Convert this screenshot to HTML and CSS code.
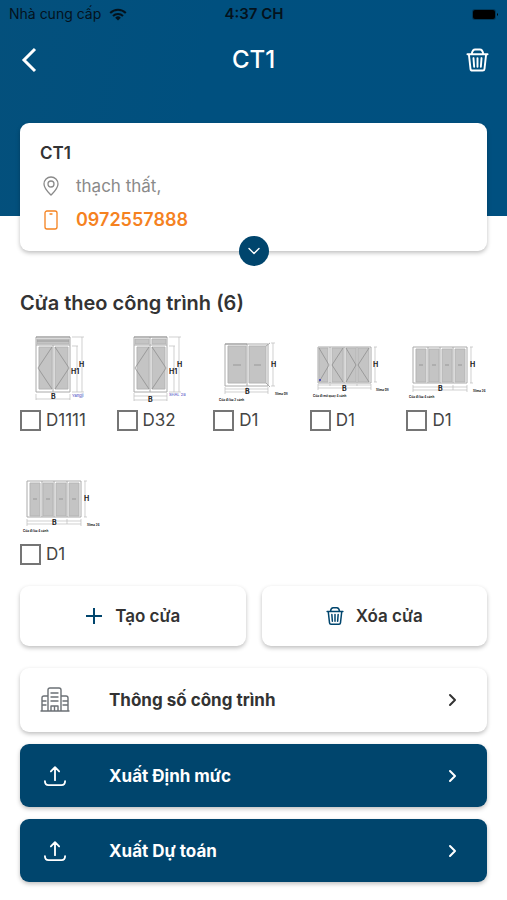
FILE: index.html
```
<!DOCTYPE html>
<html lang="vi">
<head>
    <meta charset="UTF-8">
    <meta name="viewport" content="width=device-width, initial-scale=1.0">
    <title>CT1</title>
    <link rel="stylesheet" href="styles.css">
</head>
<body>
    <!-- shared icons -->
    <svg class="sprite" aria-hidden="true">
        <symbol id="trash" viewBox="0 0 24 26">
            <path d="M1.500 7h21M3 7l1.700 15.200a2 2 0 0 0 2 1.800h10.600a2 2 0 0 0 2-1.800L21 7M6 6.500C6.500 3.500 7.500 2 9.500 2h5c2 0 3 1.500 3.500 4.500M7.800 11l.7 9M12 11v9M16.200 11l-.7 9"/>
        </symbol>
        <symbol id="upload" viewBox="0 0 24 24">
            <path d="M12 16.500V2.500M7.500 7L12 2.300 16.500 7M1 17.500c0 3 1 4.500 4 4.500h14c3 0 4-1.500 4-4.500"/>
        </symbol>
        <symbol id="next" viewBox="0 0 12 16">
            <path d="M3 3l5 5-5 5"/>
        </symbol>
        <symbol id="door-four" viewBox="0 0 80 72" overflow="visible">
            <path class="frame" d="M7 15h54v36H7zM22 15v36M34 15v36M47 15v36"/>
            <path class="glass" d="M10 17h10v33H10zM23 17h10v33H23zM36 17h10v33H36zM49 17h10v33H49z"/>
            <path class="line" d="M13 33h4M26 33h4M39 33h4M52 33h4"/>
            <path class="dim" d="M65 15v36M64 15h3M64 51h3M7 55h54M7 58h54M7 53v7M47 53v5M61 53v7"/>
            <text class="mark" x="32" y="59">B</text>
            <text class="mark" x="64" y="35">H</text>
            <text class="note" x="3" y="66">Cửa đi lùa 4 cánh</text>
            <text class="note" x="67" y="60">Slima 24</text>
        </symbol>
    </svg>

    <header class="hero">
        <div class="status">
            <span class="carrier">Nhà cung cấp
                <svg class="wifi" viewBox="0 0 18 13">
                    <path d="M1.200 5a11 11 0 0 1 15.600 0M4 8a7 7 0 0 1 10 0"/>
                    <path class="dot" d="M9 12.500L6.200 9.700a4 4 0 0 1 5.600 0z"/>
                </svg>
            </span>
            <span class="time">4:37 CH</span>
            <svg class="battery" viewBox="0 0 28 13">
                <rect class="shell" x="1" y="1" width="24" height="11" rx="3"/>
                <rect x="2" y="2" width="22" height="9" rx="2"/>
                <path d="M26 5q2 1.500 0 3z"/>
            </svg>
        </div>
        <nav class="topbar">
            <button class="icon-btn" aria-label="Quay lại">
                <svg class="back" viewBox="0 0 16 26"><path d="M14 2L3 13l11 11"/></svg>
            </button>
            <h1>CT1</h1>
            <button class="icon-btn" aria-label="Xóa công trình">
                <svg class="trash-lg"><use href="#trash"/></svg>
            </button>
        </nav>
    </header>

    <main>
        <section class="card info">
            <h2>CT1</h2>
            <p class="info-row">
                <svg viewBox="0 0 18 20"><path d="M9 19C6 16 2 12.500 2 8a7 7 0 0 1 14 0c0 4.500-4 8-7 11z"/><circle cx="9" cy="8" r="3"/></svg>
                <span>thạch thất,</span>
            </p>
            <p class="info-row phone">
                <svg viewBox="0 0 18 20"><rect x="3" y="1" width="12" height="18" rx="2"/><path d="M8 4h2"/></svg>
                <a href="tel:0972557888">0972557888</a>
            </p>
            <button class="expand" aria-label="Mở rộng">
                <svg viewBox="0 0 12 8"><path d="M1 1.500l5 5 5-5"/></svg>
            </button>
        </section>

        <h2 class="section-title">Cửa theo công trình (6)</h2>

        <div class="doors">
            <div class="door">
                <svg class="drawing" viewBox="0 0 80 72">
                    <path class="frame" d="M16 5h34v55H16zM16 13h34M33 13v47"/>
                    <path class="glass" d="M17 7h32v5H17zM19 15h13v42H19zM35 15h13v42H35z"/>
                    <path class="line" d="M16 5h34M17 9h32M32 15L18 36l14 21M35 15l14 21-14 21"/>
                    <path class="dim" d="M52 5h12M52 14h6M52 60h12M57 14v46M62 5v55M16 67h34M16 62v6M50 62v6"/>
                    <text class="mark" x="31" y="67">B</text>
                    <text class="mark" x="59" y="35">H</text>
                    <text class="mark" x="51" y="42">H1</text>
                    <text class="note blue" x="52" y="65">Yangji</text>
                </svg>
                <label><input type="checkbox">D1111</label>
            </div>
            <div class="door">
                <svg class="drawing" viewBox="0 0 80 72">
                    <path class="frame" d="M17 5h33v55H17zM17 13h33M33 5v55"/>
                    <path class="glass" d="M18 7h14v5H18zM35 7h14v5H35zM20 15h12v42H20zM35 15h13v42H35z"/>
                    <path class="line" d="M17 5h33M32 15L18 36l14 21M35 15l14 21-14 21"/>
                    <path class="dim" d="M52 5h12M52 14h6M52 60h12M57 14v46M62 5v55M17 64h33M17 68h33M17 61v8M50 61v8"/>
                    <text class="mark" x="31" y="70">B</text>
                    <text class="mark" x="60" y="35">H</text>
                    <text class="mark" x="52" y="42">H1</text>
                    <text class="note blue" x="52" y="64">SHAL 28</text>
                </svg>
                <label><input type="checkbox">D32</label>
            </div>
            <div class="door">
                <svg class="drawing" viewBox="0 0 80 72">
                    <path class="frame" d="M12 12h43v42H12zM34 12v42M53 14l4-3M53 51l4 4"/>
                    <path class="glass" d="M15 14h18v37H15zM36 14h17v37H36z"/>
                    <path class="line" d="M12 12h22M20 33h8M41 33h7"/>
                    <path class="dim" d="M60 11v43M58 11h4M58 54h4M12 57h43M12 60h43M12 55v7M34 55v3M55 55v7"/>
                    <text class="mark" x="32" y="62">B</text>
                    <text class="mark" x="58" y="35">H</text>
                    <text class="note" x="6" y="69">Cửa đi lùa 2 cánh</text>
                    <text class="note" x="62" y="63">Slima 08</text>
                </svg>
                <label><input type="checkbox">D1</label>
            </div>
            <div class="door">
                <svg class="drawing" viewBox="0 0 80 72">
                    <path class="frame" d="M8 15h53v36H8zM20 15v36M34 15v36M47 15v36"/>
                    <path class="glass" d="M9 16h9v34H9zM22 16h11v34H22zM36 16h10v34H36zM48 16h11v34H48z"/>
                    <path class="line" d="M9 16l10 17L9 50M33 16L22 33l11 17M36 16l10 17-10 17M59 16L48 33l11 17"/>
                    <path class="dim" d="M65 15v35M64 15h3M64 50h3M8 53h53M8 56h53M8 52v6M20 52v2M47 52v2M61 52v6"/>
                    <circle class="blue" cx="10" cy="48" r="1"/>
                    <text class="mark" x="32" y="59">B</text>
                    <text class="mark" x="63" y="35">H</text>
                    <text class="note" x="3" y="65">Cửa đi mở quay 4 cánh</text>
                    <text class="note" x="66" y="59">Slima 08</text>
                </svg>
                <label><input type="checkbox">D1</label>
            </div>
            <div class="door">
                <svg class="drawing"><use href="#door-four"/></svg>
                <label><input type="checkbox">D1</label>
            </div>
            <div class="door">
                <svg class="drawing"><use href="#door-four"/></svg>
                <label><input type="checkbox">D1</label>
            </div>
        </div>

        <div class="actions">
            <button class="card action">
                <svg class="plus" viewBox="0 0 18 18"><path d="M9 1v16M1 9h16"/></svg>
                Tạo cửa
            </button>
            <button class="card action">
                <svg class="trash-sm"><use href="#trash"/></svg>
                Xóa cửa
            </button>
        </div>

        <div class="menu">
            <button class="card menu-item">
                <svg class="building" viewBox="0 0 30 26">
                    <path d="M1 24h28M8 24V3q0-2 2-2h9q2 0 2 2v21M8 9H4Q2 9 2 11v13M21 9h5q2 0 2 2v13M11 6h7M11 10h7M11 14h7M3 14h3M3 18h3M23 14h4M23 18h4M11 24v-5h7v5M14.500 19v5"/>
                </svg>
                <span>Thông số công trình</span>
                <svg class="next"><use href="#next"/></svg>
            </button>
            <button class="card menu-item dark">
                <svg class="upload"><use href="#upload"/></svg>
                <span>Xuất Định mức</span>
                <svg class="next"><use href="#next"/></svg>
            </button>
            <button class="card menu-item dark">
                <svg class="upload"><use href="#upload"/></svg>
                <span>Xuất Dự toán</span>
                <svg class="next"><use href="#next"/></svg>
            </button>
        </div>
    </main>
</body>
</html>
```
FILE: styles.css
```
* {
    margin: 0;
    padding: 0;
    box-sizing: border-box;
    font-family: Inter, "Liberation Sans", sans-serif;
}

body {
    background: #fff;
    color: #333;
    font-size: 17px;
    line-height: 24px;
}

button {
    border: none;
    background: none;
    color: inherit;
    font-size: 17px;
    font-weight: 600;
    line-height: 24px;
    cursor: pointer;
}

svg {
    display: block;
    fill: none;
    stroke: currentColor;
    stroke-width: 2;
    stroke-linecap: round;
    stroke-linejoin: round;
}

.sprite {
    position: absolute;
    width: 0;
    height: 0;
}

.hero {
    height: 216px;
    background: linear-gradient(100deg, #04507c, #00507f 40%, #005080);
}

/* status bar */
.status {
    display: grid;
    grid-template-columns: 1fr auto 1fr;
    align-items: center;
    height: 28px;
    padding: 0 8px 0 9px;
    color: #04121c;
    font-size: 14px;
}

.carrier {
    display: flex;
    align-items: center;
    gap: 8px;
}

.wifi {
    width: 18px;
    height: 13px;
    stroke-linecap: butt;
}

.wifi .dot {
    fill: currentColor;
    stroke: none;
}

.time {
    font-size: 15px;
    font-weight: 600;
}

.battery {
    width: 28px;
    height: 13px;
    justify-self: end;
    fill: #000;
    stroke: none;
}

.battery .shell {
    fill: #003a5c;
}

/* title bar */
.topbar {
    display: flex;
    align-items: center;
    justify-content: space-between;
    height: 64px;
    padding: 0 17px;
    color: #fff;
}

.topbar h1 {
    font-size: 24px;
    font-weight: 500;
}

.icon-btn {
    display: flex;
    justify-content: center;
    width: 24px;
}

.back {
    width: 16px;
    height: 26px;
    stroke-width: 3;
    stroke-linecap: butt;
    stroke-linejoin: miter;
}

.trash-lg {
    width: 23px;
    height: 26px;
}

main {
    margin-top: -93px;
    padding: 0 20px 20px;
}

.card {
    background: #fff;
    border-radius: 9px;
    box-shadow: 0 2px 4px rgba(0, 0, 0, 0.25);
}

.info {
    position: relative;
    height: 128px;
    padding: 18px 20px;
}

.info h2 {
    font-size: 17px;
    font-weight: 600;
}

.info-row {
    display: flex;
    align-items: center;
    gap: 16px;
    margin-top: 10px;
    padding-left: 2px;
    color: #8a8a8a;
}

.info-row:first-of-type {
    margin-top: 9px;
}

.info-row svg {
    width: 18px;
    height: 20px;
    stroke-width: 1.3;
}

.phone {
    color: #f5821f;
    font-size: 18px;
    font-weight: 600;
}

.phone a {
    color: inherit;
    text-decoration: none;
}

.expand {
    position: absolute;
    bottom: -15px;
    left: 50%;
    display: flex;
    align-items: center;
    justify-content: center;
    width: 30px;
    height: 30px;
    margin-left: -15px;
    border-radius: 50%;
    background: #00456d;
    color: #fff;
}

.expand svg {
    width: 12px;
    height: 8px;
    stroke-width: 1.4;
}

.section-title {
    margin: 40px 0 17px;
    font-size: 20px;
    font-weight: 600;
}

/* door list */
.doors {
    display: grid;
    grid-template-columns: repeat(5, 1fr);
    row-gap: 34px;
    margin-right: -16px;
}

.drawing {
    width: 80px;
    height: 72px;
    margin-bottom: 4px;
    overflow: visible;
    stroke-linecap: butt;
    stroke-linejoin: miter;
}

.frame {
    stroke: #aaa;
    stroke-width: 1;
}

.glass {
    fill: #c4c4c4;
    stroke: #b4b4b4;
    stroke-width: 1;
}

.line {
    stroke: #888;
    stroke-width: 0.7;
}

.dim {
    stroke: #bbb;
    stroke-width: 0.7;
}

.mark,
.note {
    fill: #222;
    stroke: none;
    font-size: 7px;
    font-weight: 700;
}

.note {
    font-size: 3px;
}

.blue {
    fill: #3333bb;
    stroke: none;
}

.note.blue {
    font-size: 4px;
    font-weight: 400;
}

.door label {
    display: flex;
    align-items: center;
    gap: 5px;
    color: #444;
}

.door input {
    appearance: none;
    width: 21px;
    height: 21px;
    border: 2px solid #757575;
    background: #fff;
}

.door input:checked {
    background: #00456d;
}

.actions {
    display: grid;
    grid-template-columns: 1fr 1fr;
    gap: 16px;
    margin-top: 20px;
}

.action {
    display: flex;
    align-items: center;
    justify-content: center;
    gap: 12px;
    height: 60px;
}

.action svg {
    color: #00456d;
}

.plus {
    width: 18px;
    height: 18px;
    stroke-linecap: butt;
}

.trash-sm {
    width: 18px;
    height: 20px;
}

.menu {
    display: flex;
    flex-direction: column;
    gap: 12px;
    margin-top: 22px;
}

.menu-item {
    display: grid;
    grid-template-columns: 30px 1fr 12px;
    align-items: center;
    justify-items: center;
    column-gap: 39px;
    height: 64px;
    padding: 0 28px 0 20px;
    font-weight: 700;
}

.menu-item span {
    justify-self: start;
}

.menu-item.dark {
    height: 63px;
    background: #00456d;
    color: #fff;
}

.building {
    width: 30px;
    height: 26px;
    color: #6b7075;
    stroke-width: 1.4;
}

.upload {
    width: 22px;
    height: 24px;
}

.next {
    width: 12px;
    height: 16px;
}
```
